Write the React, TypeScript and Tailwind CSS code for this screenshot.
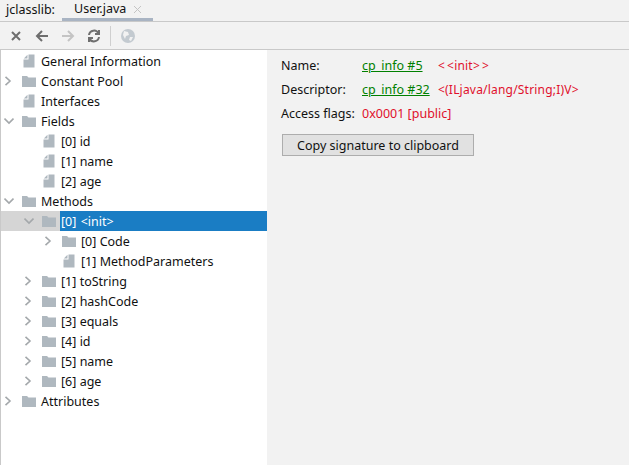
import type { ReactNode } from 'react';

const font = "font-['Noto_Sans','Liberation_Sans',sans-serif]";

type Row = { depth: number; label: string; kind: 'folder' | 'file'; arrow?: 'right' | 'down'; selected?: boolean };

const rows: Row[] = [
  { depth: 0, label: 'General Information', kind: 'file' },
  { depth: 0, label: 'Constant Pool', kind: 'folder', arrow: 'right' },
  { depth: 0, label: 'Interfaces', kind: 'file' },
  { depth: 0, label: 'Fields', kind: 'folder', arrow: 'down' },
  { depth: 1, label: '[0] id', kind: 'file' },
  { depth: 1, label: '[1] name', kind: 'file' },
  { depth: 1, label: '[2] age', kind: 'file' },
  { depth: 0, label: 'Methods', kind: 'folder', arrow: 'down' },
  { depth: 1, label: '[0] <init>', kind: 'folder', arrow: 'down', selected: true },
  { depth: 2, label: '[0] Code', kind: 'folder', arrow: 'right' },
  { depth: 2, label: '[1] MethodParameters', kind: 'file' },
  { depth: 1, label: '[1] toString', kind: 'folder', arrow: 'right' },
  { depth: 1, label: '[2] hashCode', kind: 'folder', arrow: 'right' },
  { depth: 1, label: '[3] equals', kind: 'folder', arrow: 'right' },
  { depth: 1, label: '[4] id', kind: 'folder', arrow: 'right' },
  { depth: 1, label: '[5] name', kind: 'folder', arrow: 'right' },
  { depth: 1, label: '[6] age', kind: 'folder', arrow: 'right' },
  { depth: 0, label: 'Attributes', kind: 'folder', arrow: 'right' },
];

const Arrow = ({ dir }: { dir?: 'right' | 'down' }) => (
  <svg width="10" height="10" viewBox="0 0 10 10" fill="none" stroke="#a4a8ab" strokeWidth="1.6" className="shrink-0">
    {dir === 'right' && <path d="M1.5 0.8 L6 5 L1.5 9.2" />}
    {dir === 'down' && <path d="M0.5 2.5 L5 7 L9.5 2.5" />}
  </svg>
);

const FolderIcon = () => (
  <svg width="14" height="11" viewBox="0 0 14 11" className="shrink-0">
    <path d="M0 0 H5 L6.5 1.5 H14 V11 H0 Z" fill="#afb8bf" />
  </svg>
);

const FileIcon = () => (
  <svg width="12" height="14" viewBox="0 0 12 14" className="shrink-0">
    <path d="M5.5 0.5 H11.5 V13.5 H0.5 V5.5 H5.5 Z" fill="#afb8bf" />
    <path d="M4.5 0.8 V4.5 H0.8 Z" fill="#afb8bf" />
  </svg>
);

const TreeRow = ({ row }: { row: Row }) => (
  <div className={`flex h-5 items-center ${row.selected ? 'bg-[#d5d5d5]' : ''}`}>
    <div className={row.depth === 0 ? 'w-[3px] shrink-0' : row.depth === 1 ? 'w-[23px] shrink-0' : 'w-[43px] shrink-0'} />
    <Arrow dir={row.arrow} />
    <div className="ml-2 w-[14px] shrink-0 flex justify-center">
      {row.kind === 'folder' ? <FolderIcon /> : <FileIcon />}
    </div>
    {row.selected ? (
      <div className="ml-1 pl-[1px] pt-[1px] flex-1 h-5 leading-5 bg-[#1a7dc4] text-white whitespace-pre">
        [0] <span className="ml-[1px]">&lt;init&gt;</span>
      </div>
    ) : (
      <div className="ml-[5px] pt-[1px] h-5 leading-5 text-[#111] whitespace-pre">{row.label}</div>
    )}
  </div>
);

const ToolbarIcon = ({ d, color }: { d: string; color: string }) => (
  <svg width="16" height="16" viewBox="0 0 16 16" fill="none" stroke={color} strokeWidth="2" className="shrink-0">
    <path d={d} />
  </svg>
);

const InfoRow = ({ label, link, value }: { label: string; link: string; value: ReactNode }) => (
  <div className="flex h-6 items-center">
    <span className="w-[81px] text-[#111]">{label}</span>
    <span className="w-[76px] text-[#008000] underline">{link}</span>
    <span className="text-[12px] text-[#e0102c] tracking-[0.2px]">{value}</span>
  </div>
);

export default function App() {
  return (
    <div className={`${font} w-[629px] h-[465px] overflow-hidden bg-white text-[12.5px] flex flex-col`}>
      <div className="h-[21px] bg-[#f2f2f2] flex items-center shrink-0">
        <span className="ml-[6px] w-[56px] text-[#111]">jclasslib:</span>
        <div className="w-[91px] h-[21px] pl-3 flex items-center gap-[7px] border-b-[3px] border-[#a9b4c3]">
          <span className="text-[#111]">User.java</span>
          <svg width="9" height="9" viewBox="0 0 9 9" stroke="#c4c4c4" strokeWidth="1">
            <path d="M1 1 L8 8 M8 1 L1 8" />
          </svg>
        </div>
      </div>
      <div className="h-[29px] shrink-0 bg-[#f2f2f2] border-y border-[#c9c9c9] flex items-center pl-2 gap-[10px]">
        <ToolbarIcon d="M4 4 L12 12 M12 4 L4 12" color="#6e6e6e" />
        <ToolbarIcon d="M14 8 H3 M8 3 L3 8 L8 13" color="#6e6e6e" />
        <ToolbarIcon d="M2 8 H13 M8 3 L13 8 L8 13" color="#c4c4c4" />
        <svg width="16" height="16" viewBox="0 0 16 16" fill="none" stroke="#6e6e6e" strokeWidth="2" className="shrink-0">
          <path d="M3 7 A5 5 0 0 1 12.5 5.5 M13 2 V6 H9 M13 9 A5 5 0 0 1 3.5 10.5 M3 14 V10 H7" />
        </svg>
        <div className="w-px h-5 bg-[#cfcfcf] -ml-[2px]" />
        <svg width="16" height="16" viewBox="0 0 16 16" className="shrink-0 -ml-[1px]">
          <circle cx="8" cy="8" r="7" fill="#c3cad0" />
          <path d="M4 3 L8 4 L9 7 L6 8 L5 11 L3 7 Z M10 9 L13 9 L11 13 L9 12 Z" fill="#f2f2f2" />
        </svg>
      </div>
      <div className="flex-1 flex min-h-0">
        <div className="w-[267px] shrink-0 pt-[1px] border-l border-[#c9c9c9]">
          {rows.map((row, i) => (
            <TreeRow key={i} row={row} />
          ))}
        </div>
        <div className="flex-1 bg-[#f2f2f2] pl-[14px] pt-1">
          <InfoRow label="Name:" link="cp_info #5" value={<><span className="mr-[2px]">&lt;</span>&lt;init&gt;<span className="ml-[2px]">&gt;</span></>} />
          <InfoRow label="Descriptor:" link="cp_info #32" value="<(ILjava/lang/String;I)V>" />
          <div className="flex h-6 items-center">
            <span className="w-[81px] text-[#111]">Access flags:</span>
            <span className="text-[#e0102c]">0x0001 [public]</span>
          </div>
          <button className="mt-2 ml-[1px] block w-[192px] h-[22px] pt-[1px] bg-[#e1e1e1] border border-[#adadad] text-[#111] text-center leading-5">
            Copy signature to clipboard
          </button>
        </div>
      </div>
    </div>
  );
}
